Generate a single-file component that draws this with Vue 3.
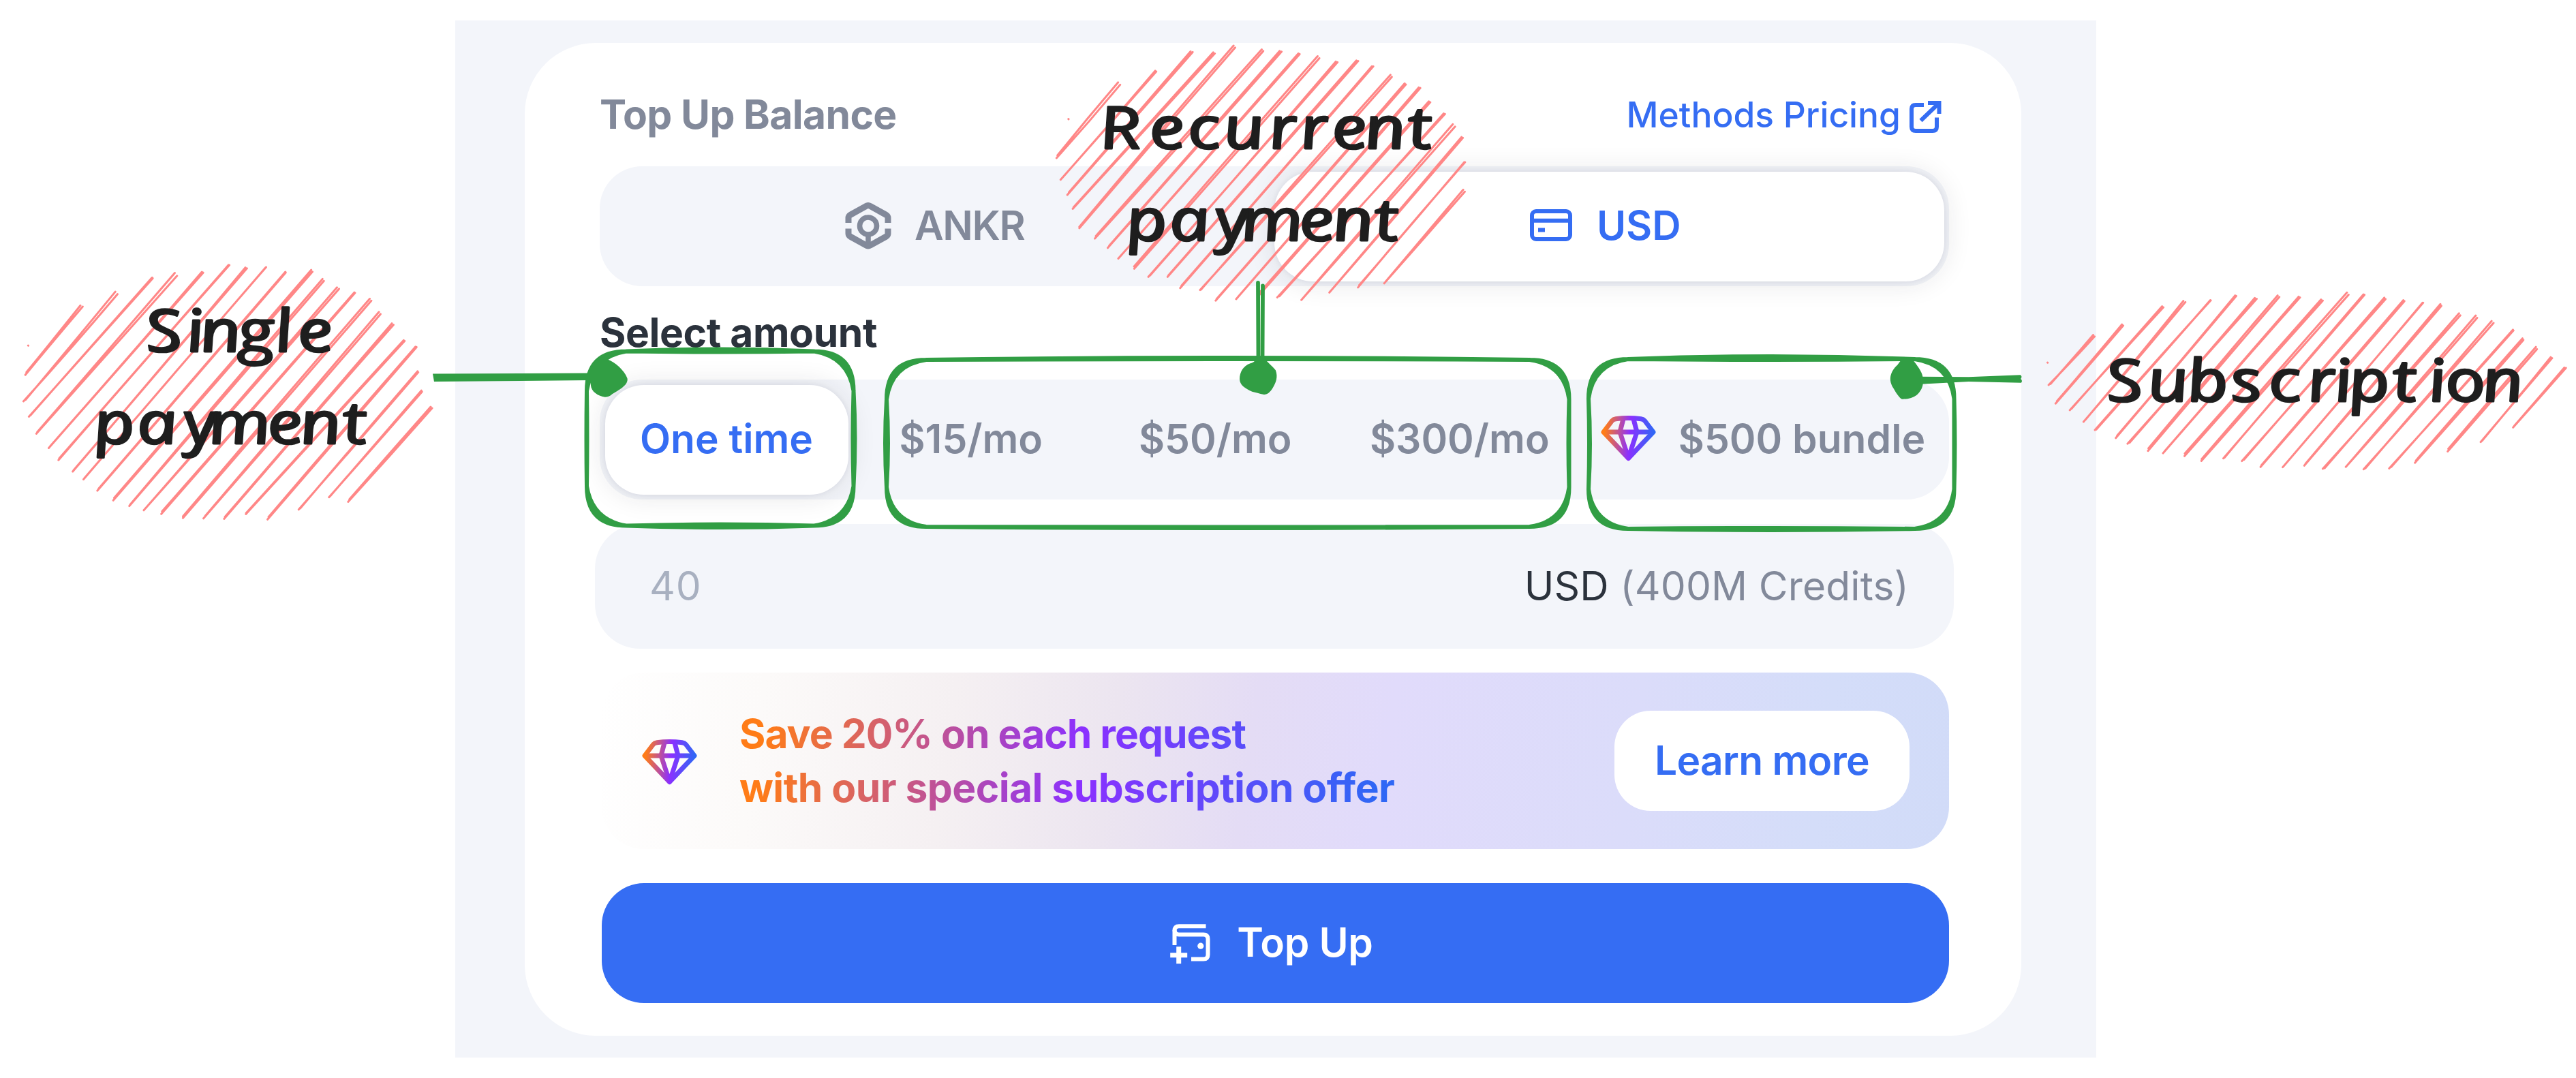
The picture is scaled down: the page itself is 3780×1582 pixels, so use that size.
<script setup>
const plans = ['$15/mo', '$50/mo', '$300/mo']

// Repeatable pseudo-random wobble for the hand-drawn strokes.
const wobble = (n) => {
  const v = Math.sin(n * 127.1 + 11.7) * 43758.5453
  return v - Math.floor(v) - 0.5
}

// Each hatch: origin, grid scale, and the upper and lower end of every stroke.
const hatches = [
  {
    ox: 0, oy: 360, sx: 1.742, sy: 3, dot: [72, 441],
    top: [[208, 267], [298, 210], [390, 145], [450, 128], [518, 119], [585, 88], [630, 99], [679, 97], [730, 120], [797, 112], [826, 153], [864, 187], [907, 209], [948, 240], [972, 299], [1004, 349], [1033, 417], [1064, 450], [1068, 558], [1078, 642], [1103, 714]],
    bottom: [[66, 565], [63, 682], [76, 752], [93, 827], [126, 890], [150, 944], [186, 992], [215, 1027], [250, 1077], [290, 1117], [332, 1144], [370, 1160], [414, 1177], [468, 1197], [522, 1197], [573, 1202], [629, 1182], [686, 1202], [766, 1159], [842, 1107], [892, 1123]],
  },
  {
    ox: 1500, oy: 40, sx: 2.24, sy: 2.8, dot: [152, 377],
    top: [[318, 230], [440, 180], [557, 101], [630, 104], [698, 81], [789, 92], [850, 100], [910, 110], [974, 122], [1034, 142], [1102, 139], [1153, 162], [1213, 200], [1258, 230], [1306, 250], [1338, 304], [1386, 354], [1419, 404], [1447, 452], [1455, 557], [1452, 672]],
    bottom: [[116, 532], [126, 625], [152, 684], [168, 745], [188, 825], [242, 863], [285, 902], [318, 949], [368, 987], [418, 1021], [480, 1025], [521, 1067], [588, 1079], [637, 1119], [706, 1113], [774, 1102], [842, 1109], [918, 1119], [1012, 1088], [1104, 1065], [1192, 1048]],
  },
  {
    ox: 2980, oy: 400, sx: 1.96, sy: 3, dot: [48, 396],
    top: [[183, 280], [264, 230], [380, 154], [442, 127], [517, 123], [590, 101], [648, 116], [713, 106], [772, 110], [836, 118], [912, 93], [959, 99], [1018, 115], [1072, 120], [1128, 132], [1180, 144], [1233, 184], [1280, 192], [1328, 219], [1387, 254], [1415, 293], [1454, 332], [1497, 375], [1536, 418]],
    bottom: [[54, 492], [73, 573], [114, 605], [155, 652], [185, 692], [246, 723], [281, 751], [338, 779], [382, 790], [442, 802], [491, 823], [557, 817], [610, 825], [662, 850], [725, 855], [788, 845], [842, 863], [909, 851], [960, 865], [1034, 857], [1107, 832], [1199, 782], [1295, 742], [1390, 677]],
  },
]

const hatchPath = (h, k) => {
  const parts = h.top.flatMap((t, i) => {
    const b = h.bottom[i]
    return [0, 1].map((pass) => {
      const j = (n) => wobble(k * 500 + i * 8 + pass * 4 + n)
      const side = pass ? 1 : -1
      const gap = 1 + j(0) * 1.8
      const x1 = h.ox + t[0] / h.sx + side * gap
      const y1 = h.oy + t[1] / h.sy + side * gap * 0.8 + j(1) * 2
      const x2 = h.ox + b[0] / h.sx - side * (0.8 + j(2) * 2)
      const y2 = h.oy + b[1] / h.sy + side * 1.2 + j(3) * 2
      const mx = (x1 + x2) / 2 + j(2) * 3
      const my = (y1 + y2) / 2 + j(1) * 3
      return `M${x1.toFixed(1)} ${y1.toFixed(1)}Q${mx.toFixed(1)} ${my.toFixed(1)} ${x2.toFixed(1)} ${y2.toFixed(1)}`
    })
  })
  const dx = h.ox + h.dot[0] / h.sx
  const dy = h.oy + h.dot[1] / h.sy
  parts.push(`M${dx} ${dy}l.2 .2`)
  return parts.join('')
}

// Rounded frame stroked twice; t, r, b, l push the middle of each side outwards.
const frame = (x1, y1, x2, y2, rad, t, r, b, l, c = 0) => {
  const cx = (x1 + x2) / 2
  const cy = (y1 + y2) / 2
  return `M${x1 + rad} ${y1}Q${cx} ${y1 - 2 * t} ${x2 - rad} ${y1}` +
    `Q${x2 - c} ${y1 + c} ${x2} ${y1 + rad}Q${x2 + 2 * r} ${cy} ${x2} ${y2 - rad}` +
    `Q${x2 - c} ${y2 - c} ${x2 - rad} ${y2}Q${cx} ${y2 + 2 * b} ${x1 + rad} ${y2}` +
    `Q${x1 + c} ${y2 - c} ${x1} ${y2 - rad}Q${x1 - 2 * l} ${cy} ${x1} ${y1 + rad}` +
    `Q${x1 + c} ${y1 + c} ${x1 + rad} ${y1}`
}

const frames = [
  frame(861, 515.5, 1252.5, 771.5, 58, 3, 2, 2.5, 0.5) + frame(861, 515.5, 1252.5, 771.5, 58, -1, -1, -2, -0.5, 8),
  frame(1301, 528, 2302.5, 773, 58, 3, -1, 0.5, 2) + frame(1301, 528, 2302.5, 773, 58, 1, 0, 2, -2, 7),
  frame(2331, 527, 2867.5, 776, 58, 4, 1, 2, -1) + frame(2331, 527, 2867.5, 776, 58, -1, 0, -1, -2, 7),
]

// Hand-lettered words: baseline plus the centre of every letter.
const stretch = 1.22
const words = [
  { text: 'Single', y: 516, x: [240, 286, 323, 375, 416, 462] },
  { text: 'payment', y: 651, x: [167, 230, 294, 351, 418, 470, 520] },
  { text: 'Recurrent', y: 218, x: [1643, 1712, 1766, 1825, 1882, 1928, 1980, 2032, 2083] },
  { text: 'payment', y: 353, x: [1682, 1745, 1808, 1866, 1932, 1985, 2034] },
  { text: 'Subscription', y: 589, x: [3117, 3181, 3239, 3296, 3352, 3406, 3438, 3476, 3528, 3576, 3617, 3672] },
]
const letterX = (w) => w.x.map((v) => ((v - w.x[0]) / stretch).toFixed(1)).join(' ')
</script>

<template>
  <main class="page">
    <section class="panel">
      <div class="card">
        <header class="head">
          <h2 class="title">Top Up Balance</h2>
          <a class="link">
            Methods Pricing
            <svg width="47" height="47" viewBox="0 0 47 47">
              <path d="M21 6H9Q3 6 3 12V38Q3 44 9 44H34Q40 44 40 38V24.500" />
              <path d="M16.500 29L42 4.500" />
              <path d="M27 3H43.500V19" />
            </svg>
          </a>
        </header>

        <div class="segment currency">
          <div class="cell">
            <svg class="ankr" width="68" height="70" viewBox="0 0 68 70">
              <path d="M5 31V24Q5 21 7.500 19.500L31 6.500Q34 4.500 37 6.500L60.500 19.500Q63 21 63 24V31" />
              <path d="M5 39.500V46.500Q5 49.500 7.500 51L31 64Q34 66 37 64L60.500 51Q63 49.500 63 46.500V39.500" />
              <circle cx="34" cy="35.500" r="12.500" />
              <path d="M34 48V64" class="stem" />
            </svg>
            <span class="ankr-label">ANKR</span>
          </div>
          <div class="cell active">
            <svg class="bank" width="62" height="47" viewBox="0 0 62 47">
              <rect x="3" y="3" width="56" height="41" rx="6" />
              <path d="M3 16.700H59" />
              <path d="M12 30.500H22" />
            </svg>
            <span>USD</span>
          </div>
        </div>

        <h3 class="label">Select amount</h3>

        <div class="segment amounts">
          <div class="cell active">One time</div>
          <div v-for="p in plans" :key="p" class="cell">{{ p }}</div>
          <div class="cell bundle">
            <svg class="gem" width="81" height="67" viewBox="0 0 81 67">
              <use href="#gem-shape" />
            </svg>
            <span>$500 bundle</span>
          </div>
        </div>

        <div class="field">
          <span class="amount">40</span>
          <span class="unit"><b>USD</b> (400M Credits)</span>
        </div>

        <div class="banner">
          <svg class="gem" width="81" height="67" viewBox="0 0 81 67">
            <defs>
              <linearGradient id="gem-fill" gradientUnits="userSpaceOnUse" x1="0" y1="30" x2="81" y2="36">
                <stop offset=".06" stop-color="#ff7c17" />
                <stop offset=".52" stop-color="#8b30ff" />
                <stop offset=".95" stop-color="#2f67f5" />
              </linearGradient>
              <g id="gem-shape" fill="none" stroke="url(#gem-fill)" stroke-width="7" stroke-linejoin="round">
                <path d="M4 24L16.500 7.500Q18.500 5.300 22 4.800Q40 2.200 59 4.800Q62.500 5.300 64.500 7.500L77 24L40.500 62.500Z" />
                <path d="M4 24H77" />
                <path d="M33 5L28 24L40.500 62L53 24L48 5" />
              </g>
            </defs>
            <use href="#gem-shape" />
          </svg>
          <p class="offer">
            <span class="l1">Save 20% on each request</span><br />
            <span class="l2">with our special subscription offer</span>
          </p>
          <button class="more">Learn more</button>
        </div>

        <button class="submit">
          <svg width="59" height="59" viewBox="0 0 59 59">
            <path d="M52.500 3.300H13Q6.500 3.300 6.500 9.800V31" />
            <path d="M6.500 8.500Q6.500 15.500 13 15.500H49Q55.500 15.500 55.500 22V45Q55.500 51.500 49 51.500H31" />
            <path d="M12.700 33.300V58.300M.2 45.800H25.200" class="plus" />
            <circle cx="44.800" cy="32.200" r="4.600" />
          </svg>
          <span>Top Up</span>
        </button>
      </div>
    </section>

    <svg class="notes" width="3780" height="1582" viewBox="0 0 3780 1582">
      <path v-for="(h, k) in hatches" :key="k" class="hatch" :d="hatchPath(h, k)" />

      <path v-for="(f, k) in frames" :key="'f' + k" class="frame" :d="f" />

      <g class="blob">
        <path d="M635 548.500L867 547.500L867 558L637 560Z" />
        <path transform="translate(820 480) scale(.4464 .3333)" d="M160 142C185 155 215 190 225 225C230 250 205 272 185 287C172 296 168 308 152 308C130 304 106 285 105 255L100 195C112 160 135 140 160 142Z" />
        <path class="pin" d="M1846 415L1846.500 528" />
        <path class="pin" d="M1853 419.500L1852.500 528" />
        <path transform="translate(1500 500) scale(.523 .3333)" d="M655 78H680C690 98 702 112 711 130C718 160 712 185 703 208C695 228 688 238 678 237C665 232 655 228 645 224C625 210 610 195 610 168C610 140 620 110 640 100C650 95 655 88 655 78Z" />
        <path transform="translate(2200 480) scale(.5102 .3333)" d="M1158 140L1188 142C1200 165 1216 195 1218 220C1222 255 1215 280 1200 300C1190 312 1175 318 1158 317C1148 308 1140 285 1130 260C1118 225 1128 190 1145 167Z" />
        <path transform="translate(2200 480) scale(.5102 .3333)" d="M1212 218L1350 220L1499 211Q1505 218 1500 228Q1506 238 1501 245L1350 240L1212 251Z" />
      </g>

      <g class="script">
        <text v-for="(w, k) in words" :key="'w' + k" :x="letterX(w)" y="0" :transform="`translate(${w.x[0] + 5} ${w.y}) scale(${stretch} 1) skewX(9)`">{{ w.text }}</text>
      </g>
    </svg>
  </main>
</template>

<style scoped>
.page {
  position: relative;
  width: 3780px;
  height: 1582px;
  box-sizing: border-box;
  padding: 30px 704px 30px 668px;
  overflow: hidden;
  background: #fff;
  font-family: Inter, 'Liberation Sans', sans-serif;
  font-size: 58.7px;
  font-weight: 600;
  line-height: 80px;
  color: #82899a;
}
.panel {
  box-sizing: border-box;
  height: 1522px;
  padding: 33px 110px 32px 102px;
  background: #f3f5fa;
}
.card {
  display: flex;
  flex-direction: column;
  box-sizing: border-box;
  height: 1457px;
  padding: 65px 106px 0 110px;
  border-radius: 104px;
  background: #fff;
}
h2, h3, p { margin: 0; font: inherit; }
svg { flex: none; overflow: visible; fill: none; }
.head {
  display: flex;
  justify-content: space-between;
  height: 80px;
}
.title { font-weight: 700; letter-spacing: -0.61px; }
.link {
  display: flex;
  align-items: center;
  gap: 13px;
  margin-right: 11px;
  font-size: 51.5px;
  font-weight: 500;
  color: #356df3;
}
.link svg { margin-top: 6px; stroke: #356df3; stroke-width: 6; }
.segment {
  display: flex;
  box-sizing: border-box;
  height: 176px;
  padding: 7.500px;
  border-radius: 62px;
  background: #f3f5fa;
}
.cell {
  display: flex;
  align-items: center;
  justify-content: center;
  box-sizing: border-box;
  height: 161px;
  padding-bottom: 3px;
  border-radius: 57px;
}
.active {
  background: #fff;
  color: #356df3;
  box-shadow: 0 0 7px rgba(40, 45, 80, 0.07), 0 1px 40px rgba(30, 32, 40, 0.12);
}
.currency { margin-top: 36px; justify-content: space-between; }
.currency .cell { width: 983px; padding-right: 14px; }
.currency .active { padding-right: 11px; }
.ankr { margin-right: 34px; stroke: #82899a; stroke-width: 9; }
.ankr circle, .ankr .stem { stroke-width: 7.600; }
.ankr-label { letter-spacing: -1.34px; }
.bank { margin-right: 36px; stroke: #356df3; stroke-width: 6; }
.label {
  height: 80px;
  margin-top: 28px;
  font-weight: 700;
  letter-spacing: -0.41px;
  color: #2b323c;
}
.amounts { margin-top: 29px; }
.amounts .cell { width: 358.500px; }
.amounts .cell + .cell { padding-left: 2px; }
.amounts .active { width: 357px; }
.amounts .bundle { width: 532px; gap: 33px; }
.field {
  display: flex;
  align-items: center;
  justify-content: space-between;
  box-sizing: border-box;
  height: 183px;
  margin: 36px -7px 0 -7px;
  padding: 0 66px 2px 80px;
  border-radius: 66px;
  background: #f3f5fa;
  font-weight: 400;
}
.amount { color: #a8b0c0; letter-spacing: 0.79px; }
.unit { letter-spacing: 0.1px; }
.unit b { font-weight: 400; color: #2b323c; }
.banner {
  display: flex;
  align-items: center;
  box-sizing: border-box;
  height: 259px;
  margin: 35px 0 0 3px;
  padding: 0 58px 2px 59px;
  border-radius: 62px;
  background: linear-gradient(98deg, #fff 0%, #fcfaf9 12%, #f5f0f2 26%, #ece5f0 38%, #e4dcf5 48%, #e1dbfb 58%, #dbdcfa 76%, #d4ddf9 90%, #d1dbf8 100%);
}
.banner .gem { margin-top: 6px; }
.offer {
  margin: 0 auto 0 62px;
  font-weight: 700;
  line-height: 79px;
  background: linear-gradient(96deg, #ff7c17 4%, #8b30ff 52%, #2f67f5 97%);
  background-clip: text;
  color: transparent;
  white-space: nowrap;
}
.l1 { letter-spacing: -0.95px; }
.l2 { letter-spacing: -0.53px; }
button {
  margin: 0;
  padding: 0;
  border: 0;
  font: inherit;
}
.more {
  width: 433px;
  height: 147px;
  margin-top: 2px;
  padding-bottom: 2px;
  border-radius: 53px;
  background: #fff;
  color: #356df3;
  letter-spacing: -0.72px;
}
.submit {
  display: flex;
  align-items: center;
  justify-content: center;
  height: 176px;
  margin: 50px 0 0 3px;
  padding: 0 11px 2px 0;
  border-radius: 62px;
  background: #356df3;
  color: #fff;
  letter-spacing: -0.3px;
}
.submit svg { margin: 4px 39px 0 0; stroke: #fff; stroke-width: 6; }
.submit .plus { stroke-width: 7; }
.submit circle { fill: #fff; stroke: none; }
.notes {
  position: absolute;
  left: 0;
  top: 0;
}
.hatch { stroke: #ff8787; stroke-width: 3; stroke-linecap: round; }
.frame { stroke: #319e44; stroke-width: 6; stroke-linejoin: round; }
.blob { fill: #319e44; }
.pin { stroke: #319e44; stroke-width: 5.800; stroke-linecap: round; }
.script {
  font: italic 400 86px 'Open Sans', 'Noto Sans', sans-serif;
  fill: #1e1e1e;
  stroke: #1e1e1e;
  stroke-width: 3;
  stroke-linejoin: round;
  text-anchor: middle;
}
</style>
